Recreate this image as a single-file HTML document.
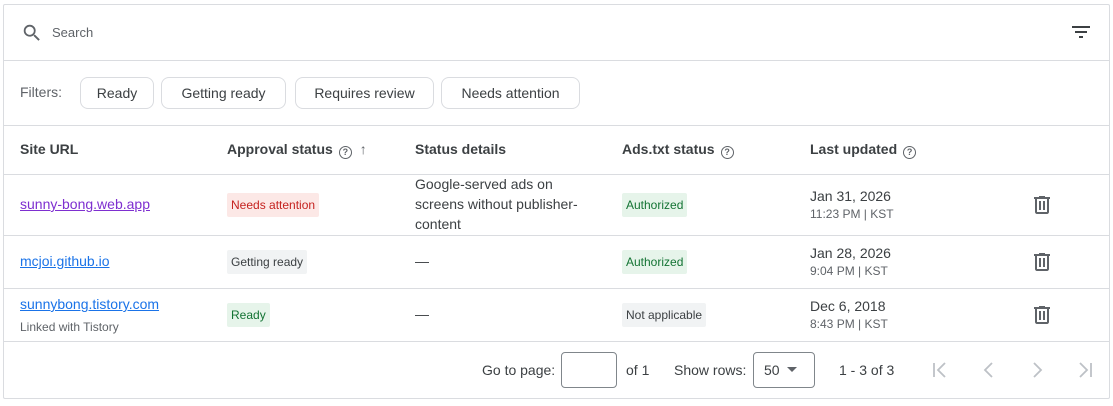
<!DOCTYPE html>
<html><head><style>
*{margin:0;padding:0;box-sizing:border-box}
body{width:1113px;height:406px;background:#fff;font-family:"Liberation Sans",Arial,sans-serif;color:#3c4043;position:relative;overflow:hidden}
.card{position:absolute;left:3px;top:4px;width:1107px;height:395px;border:1px solid #dadce0;border-radius:2px}
.hl{position:absolute;left:4px;width:1105px;height:1px;background:#dadce0}
.a{position:absolute;white-space:nowrap}
.chip{position:absolute;top:77px;height:32px;border:1px solid #dadce0;border-radius:8px;font-size:14px;line-height:30px;text-align:center;color:#3c4043}
.th{position:absolute;top:141px;font-size:14px;font-weight:bold;color:#3c4043}
.q{display:inline-block;width:13px;height:13px;border:1.5px solid #5f6368;border-radius:50%;font-size:9px;line-height:10px;text-align:center;color:#5f6368;vertical-align:-1px;margin-left:6px;font-weight:bold}
.lnk{font-size:14px;text-decoration:underline;color:#1a73e8}
.tag{position:absolute;height:24px;line-height:24px;padding:0 4px;font-size:12px;border-radius:2px}
.red{background:#fce8e6;color:#c5221f}
.grn{background:#e6f4ea;color:#137333}
.gry{background:#f1f3f4;color:#3c4043}
.d1{font-size:14px;color:#3c4043}
.d2{font-size:12px;color:#5f6368}
.box{position:absolute;border:1px solid #80868b;border-radius:4px}
.sm{font-size:14px;color:#3c4043}
</style></head><body>
<div class="card"></div>
<div class="hl" style="top:60px"></div>
<div class="hl" style="top:125px"></div>
<div class="hl" style="top:174px"></div>
<div class="hl" style="top:235px"></div>
<div class="hl" style="top:288px"></div>
<div class="hl" style="top:341px"></div>

<svg class="a" style="left:21px;top:22px" width="22" height="22" viewBox="0 0 24 24"><path fill="#5f6368" d="M15.5 14h-.79l-.28-.27A6.47 6.47 0 0016 9.5 6.5 6.5 0 109.5 16c1.61 0 3.09-.59 4.23-1.57l.27.28v.79l5 4.99L20.49 19l-4.99-5zm-6 0C7.01 14 5 11.99 5 9.5S7.01 5 9.5 5 14 7.01 14 9.5 11.99 14 9.5 14z"/></svg>
<div class="a" style="left:52px;top:25px;font-size:13px;color:#5f6368">Search</div>
<svg class="a" style="left:1069px;top:20px" width="24" height="24" viewBox="0 0 24 24"><path fill="#3c4043" d="M3 6h18v2H3zM6 11h12v2H6zM10 16h4v2h-4z"/></svg>

<div class="a" style="left:20px;top:84px;font-size:14px;color:#5f6368">Filters:</div>
<div class="chip" style="left:80px;width:74px">Ready</div>
<div class="chip" style="left:161px;width:125px">Getting ready</div>
<div class="chip" style="left:295px;width:139px">Requires review</div>
<div class="chip" style="left:441px;width:139px">Needs attention</div>

<div class="th" style="left:20px">Site URL</div>
<div class="th" style="left:227px">Approval status<span class="q">?</span> <span style="font-weight:normal;color:#5f6368;margin-left:4px">↑</span></div>
<div class="th" style="left:415px">Status details</div>
<div class="th" style="left:622px">Ads.txt status<span class="q">?</span></div>
<div class="th" style="left:810px">Last updated<span class="q">?</span></div>

<div class="a lnk" style="left:20px;top:196px;color:#7e2fd0">sunny-bong.web.app</div>
<div class="tag red" style="left:227px;top:193px">Needs attention</div>
<div class="a d1" style="left:415px;top:174px;line-height:20px">Google-served ads on<br>screens without publisher-<br>content</div>
<div class="tag grn" style="left:622px;top:193px">Authorized</div>
<div class="a d1" style="left:810px;top:188px">Jan 31, 2026</div>
<div class="a d2" style="left:810px;top:207px">11:23 PM | KST</div>

<div class="a lnk" style="left:20px;top:253px">mcjoi.github.io</div>
<div class="tag gry" style="left:227px;top:250px">Getting ready</div>
<div class="a d1" style="left:415px;top:253px">—</div>
<div class="tag grn" style="left:622px;top:250px">Authorized</div>
<div class="a d1" style="left:810px;top:245px">Jan 28, 2026</div>
<div class="a d2" style="left:810px;top:264px">9:04 PM | KST</div>

<div class="a lnk" style="left:20px;top:296px">sunnybong.tistory.com</div>
<div class="a d2" style="left:20px;top:320px">Linked with Tistory</div>
<div class="tag grn" style="left:227px;top:303px">Ready</div>
<div class="a d1" style="left:415px;top:306px">—</div>
<div class="tag gry" style="left:622px;top:303px">Not applicable</div>
<div class="a d1" style="left:810px;top:298px">Dec 6, 2018</div>
<div class="a d2" style="left:810px;top:317px">8:43 PM | KST</div>

<svg class="a" style="left:1030px;top:193px" width="24" height="24" viewBox="0 0 24 24"><path fill="#5f6368" d="M15 4V3H9v1H4v2h1v13c0 1.1.9 2 2 2h10c1.1 0 2-.9 2-2V6h1V4h-5zm2 15H7V6h10v13zM9 8h2v9H9zm4 0h2v9h-2z"/></svg>
<svg class="a" style="left:1030px;top:250px" width="24" height="24" viewBox="0 0 24 24"><path fill="#5f6368" d="M15 4V3H9v1H4v2h1v13c0 1.1.9 2 2 2h10c1.1 0 2-.9 2-2V6h1V4h-5zm2 15H7V6h10v13zM9 8h2v9H9zm4 0h2v9h-2z"/></svg>
<svg class="a" style="left:1030px;top:303px" width="24" height="24" viewBox="0 0 24 24"><path fill="#5f6368" d="M15 4V3H9v1H4v2h1v13c0 1.1.9 2 2 2h10c1.1 0 2-.9 2-2V6h1V4h-5zm2 15H7V6h10v13zM9 8h2v9H9zm4 0h2v9h-2z"/></svg>

<div class="a sm" style="left:482px;top:362px">Go to page:</div>
<div class="box" style="left:561px;top:352px;width:56px;height:36px"></div>
<div class="a sm" style="left:626px;top:362px">of 1</div>
<div class="a sm" style="left:674px;top:362px">Show rows:</div>
<div class="box" style="left:753px;top:352px;width:62px;height:36px"></div>
<div class="a sm" style="left:764px;top:362px">50</div>
<svg class="a" style="left:786px;top:366px" width="12" height="8"><path d="M1 1h10L6 6z" fill="#5f6368"/></svg>
<div class="a sm" style="left:839px;top:362px">1 - 3 of 3</div>
<svg class="a" style="left:928px;top:358px" width="24" height="24" viewBox="0 0 24 24"><path d="M6 5v14M17 5l-7 7 7 7" stroke="#bdc1c6" stroke-width="1.8" fill="none"/></svg>
<svg class="a" style="left:977px;top:358px" width="24" height="24" viewBox="0 0 24 24"><path d="M15 5l-7 7 7 7" stroke="#bdc1c6" stroke-width="1.8" fill="none"/></svg>
<svg class="a" style="left:1025px;top:358px" width="24" height="24" viewBox="0 0 24 24"><path d="M9 5l7 7-7 7" stroke="#bdc1c6" stroke-width="1.8" fill="none"/></svg>
<svg class="a" style="left:1073px;top:358px" width="24" height="24" viewBox="0 0 24 24"><path d="M7 5l7 7-7 7M18 5v14" stroke="#bdc1c6" stroke-width="1.8" fill="none"/></svg>
</body></html>
